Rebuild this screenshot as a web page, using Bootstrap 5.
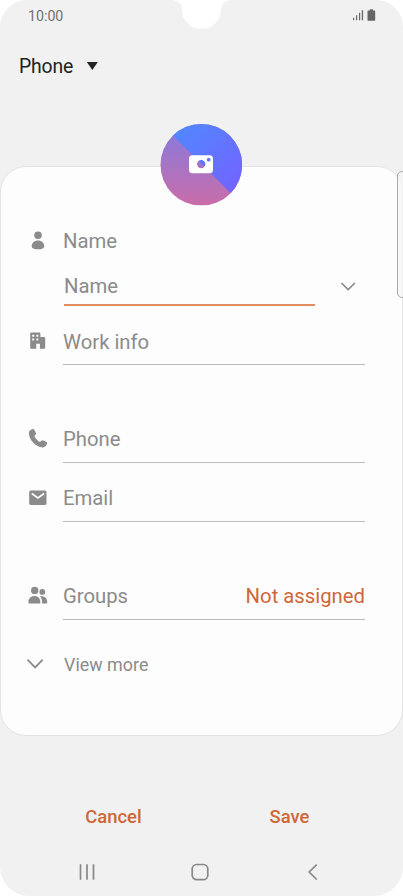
<!DOCTYPE html>
<html lang="en">
<head>
<meta charset="utf-8">
<meta name="viewport" content="width=device-width, initial-scale=1">
<title>Create contact</title>
<link href="https://cdn.jsdelivr.net/npm/bootstrap@5.3.0/dist/css/bootstrap.min.css" rel="stylesheet">
<style>
  body { background: #fff; font-family: Roboto, "Liberation Sans", sans-serif; color: #8b8b8b; }
  svg { display: block; flex: none; }
  .screen { width: 403px; height: 896px; background: #f1f1f1; border-radius: 27px 27px 29px 29px; }
  .notch { left: 173px; top: 0; }
  .status-bar { height: 32px; padding: 0 27px 0 28px; font-size: 14.2px; color: #717171; }
  .status-bar span { padding-top: 1px; }
  .account { height: 68px; padding-left: 19px; gap: 13px; font-size: 19.4px; letter-spacing: -.15px; color: #222; }
  .account span { padding-top: 1px; }
  .sheet { margin-top: 66px; height: 570px; background: #fdfdfd; border: 1px solid #e3e3e3; border-radius: 26px; }
  .photo { width: 82px; height: 82px; margin: -43px 0 0 159px; }
  .sheet-form { padding: 0 37px 0 25px; font-size: 20.3px; }
  .form-line { gap: 13px; height: 46px; }
  .form-line .glyph { width: 24px; display: flex; justify-content: center; }
  .entry { border-bottom: 1px solid #bcbcbc; height: 46px; line-height: 28px; }
  .row-name { height: 42px; margin-top: 14px; }
  .name-input { height: 44px; padding-left: 38px; }
  .name-entry { width: 251px; height: 43px; line-height: 30px; padding-top: 8px; border-bottom: 2px solid #e28c62; }
  .row-work { margin-top: 13px; }
  .row-work .entry { line-height: 30px; }
  .row-phone { margin-top: 52px; }
  .row-email { margin-top: 13px; }
  .row-groups { margin-top: 52px; }
  .row-more { margin-top: 22px; gap: 12px; font-size: 17.9px; }
  .accent { color: #cf6737; }
  .actions { height: 50px; margin-top: 56px; font-size: 18.4px; font-weight: 500; line-height: 30px; }
  .btn-flat { width: 176px; color: #cf6737; font: inherit; padding: 0; border: 0; }
  .nav-keys { height: 60px; padding: 0 84px 0 78px; }
  .home-key { margin-right: 4px; }
  .edge-handle { left: 397px; top: 171px; width: 12px; height: 127px; border: 1px solid #a9a9a9; border-radius: 5px; background: rgba(246,246,246,.65); }
</style>
</head>
<body>
<main class="screen position-relative overflow-hidden">
  <svg class="notch position-absolute" width="58" height="30" viewBox="0 0 58 30"><path fill="#fff" d="M0 0C5 1 9 4 9 9.500C9 20.500 18 29 28.500 29S48 20.500 48 9.500C48 4 52 1 57 0Z"/></svg>
  <header class="status-bar d-flex align-items-center justify-content-between">
    <span>10:00</span>
    <svg width="24" height="14" viewBox="0 1.700 24 14" fill="#666"><path d="M1 10.500h1.200V13H1zM4 8h1.200v5H4zM7 5.500h1.200V13H7zM9.800 3h1.300v10H9.800z"/><path d="M16.200 3.200h1.600V2h3.200v1.200h1.600q.6 0 .6.700v8.800q0 .7-.7.700h-6.300q-.7 0-.7-.7V3.900q0-.7.700-.7z"/></svg>
  </header>
  <div class="account d-flex align-items-center">
    <span>Phone</span>
    <svg width="12" height="8" viewBox="0 0 12 8"><path d="M.8 0h11L6.300 8z" fill="#222"/></svg>
  </div>

  <section class="sheet">
    <svg class="photo" viewBox="0 .4 82 82">
      <defs>
        <linearGradient id="warm" x1="0" y1="0" x2="0" y2="1"><stop offset=".15" stop-color="#8e79d8"/><stop offset="1" stop-color="#c96da9"/></linearGradient>
        <linearGradient id="cool" x1="0" y1="0" x2="1" y2="1"><stop offset="0" stop-color="#4c8eff"/><stop offset="1" stop-color="#785cff"/></linearGradient>
        <clipPath id="round"><circle cx="41.300" cy="41.200" r="40.800"/></clipPath>
      </defs>
      <g clip-path="url(#round)"><path fill="url(#warm)" d="M0 0h83v82H0z"/><path fill="url(#cool)" d="M1 0H83V82L70 69z"/></g>
      <path fill="#fff" fill-rule="evenodd" d="M32.500 31.600h17a3.500 3.500 0 0 1 3.500 3.500v11a3.500 3.500 0 0 1-3.500 3.500h-17a3.500 3.500 0 0 1-3.500-3.500v-11a3.500 3.500 0 0 1 3.500-3.500zM41.200 36.300a4.200 4.200 0 1 0 0 8.400 4.200 4.200 0 0 0 0-8.400zM48.700 34.200a1.900 1.900 0 1 0 0 3.800 1.900 1.900 0 0 0 0-3.800z"/>
    </svg>

    <div class="sheet-form">
      <div class="form-line row-name d-flex align-items-center">
        <span class="glyph"><svg width="20" height="20" viewBox="0 1.300 20 20" fill="#8b8b8b"><circle cx="10" cy="5.500" r="3.800"/><path d="M3.700 16.200C4 12.900 6.600 10.800 10 10.800s6 2.100 6.300 5.400c.1 2.500-2.800 3.300-6.300 3.300s-6.400-.8-6.300-3.300z"/></svg></span>
        <span>Name</span>
      </div>
      <div class="name-input d-flex align-items-center justify-content-between">
        <div class="name-entry">Name</div>
        <svg class="me-2" width="18" height="14" viewBox="0 0 18 14" fill="none" stroke="#8b8b8b" stroke-width="1.700"><path d="M2.500 6l6.700 6.500L15.900 6"/></svg>
      </div>
      <div class="form-line row-work d-flex">
        <span class="glyph pt-1"><svg width="20" height="26" viewBox="0 -.8 20 26" fill="#8b8b8b"><path fill-rule="evenodd" d="M3.200 8.600h8.200q1 0 1 1v3.500h3.800q1 0 1 1V24q0 1-1 1h-4.300v-5H8.200v5h-5q-1 0-1-1V9.600q0-1 1-1zM4.200 11v2h2v-2zM8.300 11v2h2v-2zM4.200 14.800v2h2v-2zM8.300 14.800v2h2v-2z"/></svg></span>
        <div class="entry flex-grow-1 pt-2">Work info</div>
      </div>
      <div class="form-line row-phone d-flex">
        <span class="glyph pt-2"><svg width="22" height="24" viewBox="0 -.8 22 24" fill="#8b8b8b"><path d="M3.500 4.200L5.700 3.300q1-.3 1.500.6l1.800 3.200q.4.900-.3 1.600L7.300 10.300c1.300 2.700 3.100 4.700 5.700 6l1.700-1.500q.7-.6 1.500-.2l3.400 1.700q.9.500.6 1.500-1.400 3.600-4.400 3.800C8.500 21.400 2 14 1.800 7.300q0-2.200 1.700-3.100z"/></svg></span>
        <div class="entry flex-grow-1 pt-2">Phone</div>
      </div>
      <div class="form-line row-email d-flex">
        <span class="glyph pt-2"><svg width="20" height="24" viewBox="0 -.8 20 24"><rect x="1.200" y="5.600" width="17.300" height="14.500" rx="1.600" fill="#8b8b8b"/><path d="M3.700 8.700l6.200 4.500 6.200-4.500" fill="none" stroke="#fdfdfd" stroke-width="1.600"/></svg></span>
        <div class="entry flex-grow-1 pt-2">Email</div>
      </div>
      <div class="form-line row-groups d-flex">
        <span class="glyph pt-2"><svg width="20" height="24" viewBox="0 -.4 20 24" fill="#8b8b8b"><circle cx="6.700" cy="8" r="3.700"/><circle cx="14.300" cy="9.500" r="2.900"/><path d="M.5 21v-1.800c0-3.400 2.600-5.700 6-5.700s5.800 2.300 5.800 5.700V21zM12 14c3.900-.8 7.200 1.600 7.200 5.200V21H14v-1.800c0-2.200-.7-3.900-2-5.200z"/></svg></span>
        <div class="entry flex-grow-1 pt-2 d-flex justify-content-between"><span>Groups</span><span class="accent">Not assigned</span></div>
      </div>
      <div class="form-line row-more d-flex align-items-center">
        <svg width="26" height="14" viewBox="0 .8 26 14" fill="none" stroke="#8b8b8b" stroke-width="1.800"><path d="M1.500 2.500l7.600 7.800 7.600-7.800"/></svg>
        <span>View more</span>
      </div>
    </div>
  </section>

  <div class="actions d-flex justify-content-center">
    <button class="btn btn-flat" type="button">Cancel</button>
    <button class="btn btn-flat" type="button">Save</button>
  </div>
  <nav class="nav-keys d-flex align-items-center justify-content-between">
    <svg width="18" height="18" viewBox="0 0 18 18" stroke="#888" stroke-width="1.700"><path d="M2.500 1.200v15.500M9 1.200v15.500M15.500 1.200v15.500"/></svg>
    <svg class="home-key" width="18" height="18" viewBox="0 0 18 18" fill="none" stroke="#888" stroke-width="1.700"><rect x="1.200" y="1.500" width="15.600" height="15.200" rx="4.500"/></svg>
    <svg width="12" height="18" viewBox="0 0 12 18" fill="none" stroke="#888" stroke-width="1.700"><path d="M9.700 1.700L2.200 9l7.500 7.500"/></svg>
  </nav>
  <div class="edge-handle position-absolute"></div>
</main>
<script src="https://cdn.jsdelivr.net/npm/bootstrap@5.3.0/dist/js/bootstrap.bundle.min.js"></script>
</body>
</html>
